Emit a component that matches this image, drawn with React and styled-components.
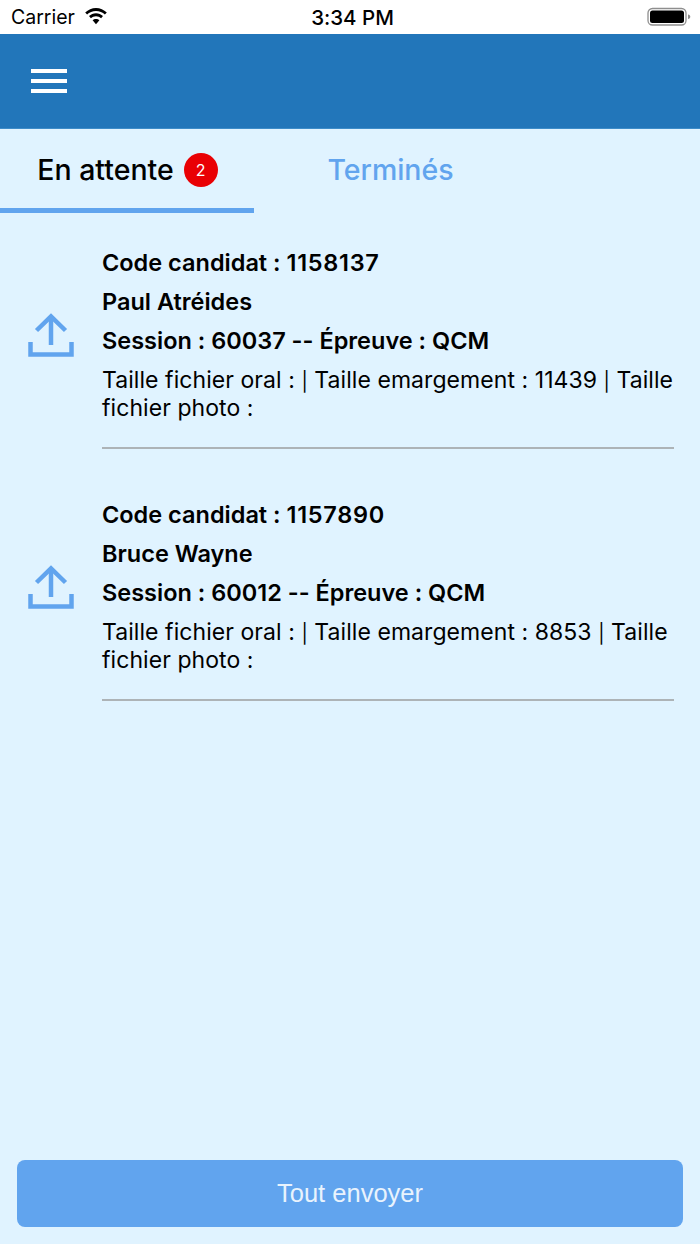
import React from "react";
import styled, { createGlobalStyle } from "styled-components";

const GlobalStyle = createGlobalStyle`
html, body {
  margin: 0;
  padding: 0;
  background: #e0f3ff;
  font-family: Inter, "Noto Sans", sans-serif;
  font-feature-settings: "calt" 0;
}
`;

const Page = styled.div`
  width: 700px;
  height: 1244px;
  display: flex;
  flex-direction: column;
  background: #e0f3ff;
  overflow: hidden;
`;

const StatusBar = styled.div`
  height: 34px;
  flex: none;
  background: #fff;
  display: grid;
  grid-template-columns: 1fr auto 1fr;
  align-items: center;
  padding: 0 8px 0 11px;
  color: #000;
`;

const Carrier = styled.div`
  display: flex;
  align-items: center;
  gap: 9px;
  font-size: 19.500px;
`;

const Clock = styled.div`
  font-size: 20.500px;
  font-weight: 500;
  padding-left: 2px;
`;

const BatteryWrap = styled.div`
  justify-self: end;
  display: flex;
`;

const Header = styled.header`
  height: 95px;
  flex: none;
  box-sizing: border-box;
  background: #2276ba;
  border-bottom: 1px solid #3d8cc9;
  display: flex;
  align-items: center;
  padding: 0 0 0 31px;
`;

const Burger = styled.div`
  width: 36px;
  display: flex;
  flex-direction: column;
  gap: 6px;
`;

const BurgerBar = styled.span`
  display: block;
  height: 4px;
  background: #fff;
`;

const Tabs = styled.nav`
  height: 84px;
  flex: none;
  display: flex;
`;

const Tab = styled.div`
  width: ${(p) => p.$width}px;
  box-sizing: border-box;
  display: flex;
  align-items: center;
  justify-content: center;
  gap: 10px;
  padding: 2px 0 0 1px;
  font-size: 28.500px;
  font-weight: 500;
  color: ${(p) => (p.$active ? "#000" : "#61a4ee")};
  border-bottom: 5px solid ${(p) => (p.$active ? "#61a4ee" : "transparent")};
`;

const Badge = styled.span`
  width: 34px;
  height: 34px;
  border-radius: 50%;
  background: #e90004;
  color: #fff;
  font-size: 16px;
  font-weight: 400;
  display: flex;
  align-items: center;
  justify-content: center;
`;

const List = styled.main`
  flex: 1;
  display: flex;
  flex-direction: column;
  padding-top: 30px;
`;

const Row = styled.section`
  display: flex;
  height: 252px;
`;

const IconCell = styled.div`
  width: 102px;
  flex: none;
  display: flex;
  justify-content: center;
  padding-top: 70px;
  box-sizing: border-box;
`;

const Body = styled.div`
  width: 572px;
  height: 206px;
  box-sizing: border-box;
  border-bottom: 2px solid #adb3b7;
  color: #000;
`;

const Strong = styled.div`
  font-size: 23.500px;
  font-weight: 600;
  line-height: 39px;
`;

const CodeNumber = styled.span`
  letter-spacing: 0.700px;
`;

const Detail = styled.div`
  font-size: 23px;
  font-weight: 400;
  line-height: 28px;
  letter-spacing: 0.060px;
  margin-top: 6px;
`;

const Separator = styled.span`
  font-size: 19px;
  line-height: 1;
`;

const Footer = styled.footer`
  flex: none;
  padding: 0 17px 17px;
`;

const SendButton = styled.button`
  width: 100%;
  height: 67px;
  border: 0;
  border-radius: 8px;
  background: #61a4ee;
  color: #e9f3fd;
  font-family: "Liberation Sans", Arial, sans-serif;
  font-size: 25.500px;
  font-weight: 400;
  padding: 0;
`;

const candidates = [
  {
    code: "1158137",
    name: "Paul Atréides",
    session: "60037",
    size: "11439",
  },
  {
    code: "1157890",
    name: "Bruce Wayne",
    session: "60012",
    size: "8853",
  },
];

function Wifi() {
  return (
    <svg width="24" height="18" viewBox="0 0 24 18" fill="#000">
      <path d="M12 2.900c3.500 0 6.600 1.400 8.900 3.600l1.900-2C19.900 1.800 16.100 0 12 0S4.100 1.800 1.200 4.500l1.900 2C5.400 4.300 8.500 2.900 12 2.900z" />
      <path d="M12 8.200c2 0 3.800.8 5.100 2l1.900-2.100C17.100 6.300 14.700 5.200 12 5.200S6.900 6.300 5 8.100l1.900 2.100c1.300-1.200 3.100-2 5.100-2z" />
      <path d="M12 10.900c-1.300 0-2.500.5-3.400 1.400l3.400 3.900 3.400-3.900c-.9-.9-2.100-1.400-3.400-1.400z" />
    </svg>
  );
}

function Battery() {
  return (
    <svg width="45" height="20" viewBox="0 0 45 20">
      <rect x="1" y="1.500" width="38" height="16.500" rx="4.500" fill="none" stroke="#8e8e8e" strokeWidth="1.300" />
      <rect x="3" y="3.500" width="34" height="12.500" rx="2.500" fill="#000" />
      <path d="M41 7.500c1.500.3 2.300 1.200 2.300 2.300s-.8 2-2.300 2.300z" fill="#8e8e8e" />
    </svg>
  );
}

function UploadIcon() {
  return (
    <svg width="46" height="44" viewBox="0 0 46 44" fill="none" stroke="#61a4ee" strokeWidth="4.500">
      <path d="M23 32V4" />
      <path d="M8.500 17.500L23 3.500l14.500 14" />
      <path d="M2.500 29v12.500h41V29" />
    </svg>
  );
}

export default function App() {
  return (
    <Page>
      <GlobalStyle />
      <StatusBar>
        <Carrier>
          Carrier
          <Wifi />
        </Carrier>
        <Clock>3:34 PM</Clock>
        <BatteryWrap>
          <Battery />
        </BatteryWrap>
      </StatusBar>
      <Header>
        <Burger>
          <BurgerBar />
          <BurgerBar />
          <BurgerBar />
        </Burger>
      </Header>
      <Tabs>
        <Tab $active $width={254}>
          En attente
          <Badge>2</Badge>
        </Tab>
        <Tab $width={272}>Terminés</Tab>
      </Tabs>
      <List>
        {candidates.map((item) => (
          <Row key={item.code}>
            <IconCell>
              <UploadIcon />
            </IconCell>
            <Body>
              <Strong>
                Code candidat : <CodeNumber>{item.code}</CodeNumber>
              </Strong>
              <Strong>{item.name}</Strong>
              <Strong>Session : {item.session} -- Épreuve : QCM</Strong>
              <Detail>
                Taille fichier oral : <Separator>|</Separator> Taille emargement : {item.size}{" "}
                <Separator>|</Separator> Taille fichier photo :
              </Detail>
            </Body>
          </Row>
        ))}
      </List>
      <Footer>
        <SendButton>Tout envoyer</SendButton>
      </Footer>
    </Page>
  );
}
